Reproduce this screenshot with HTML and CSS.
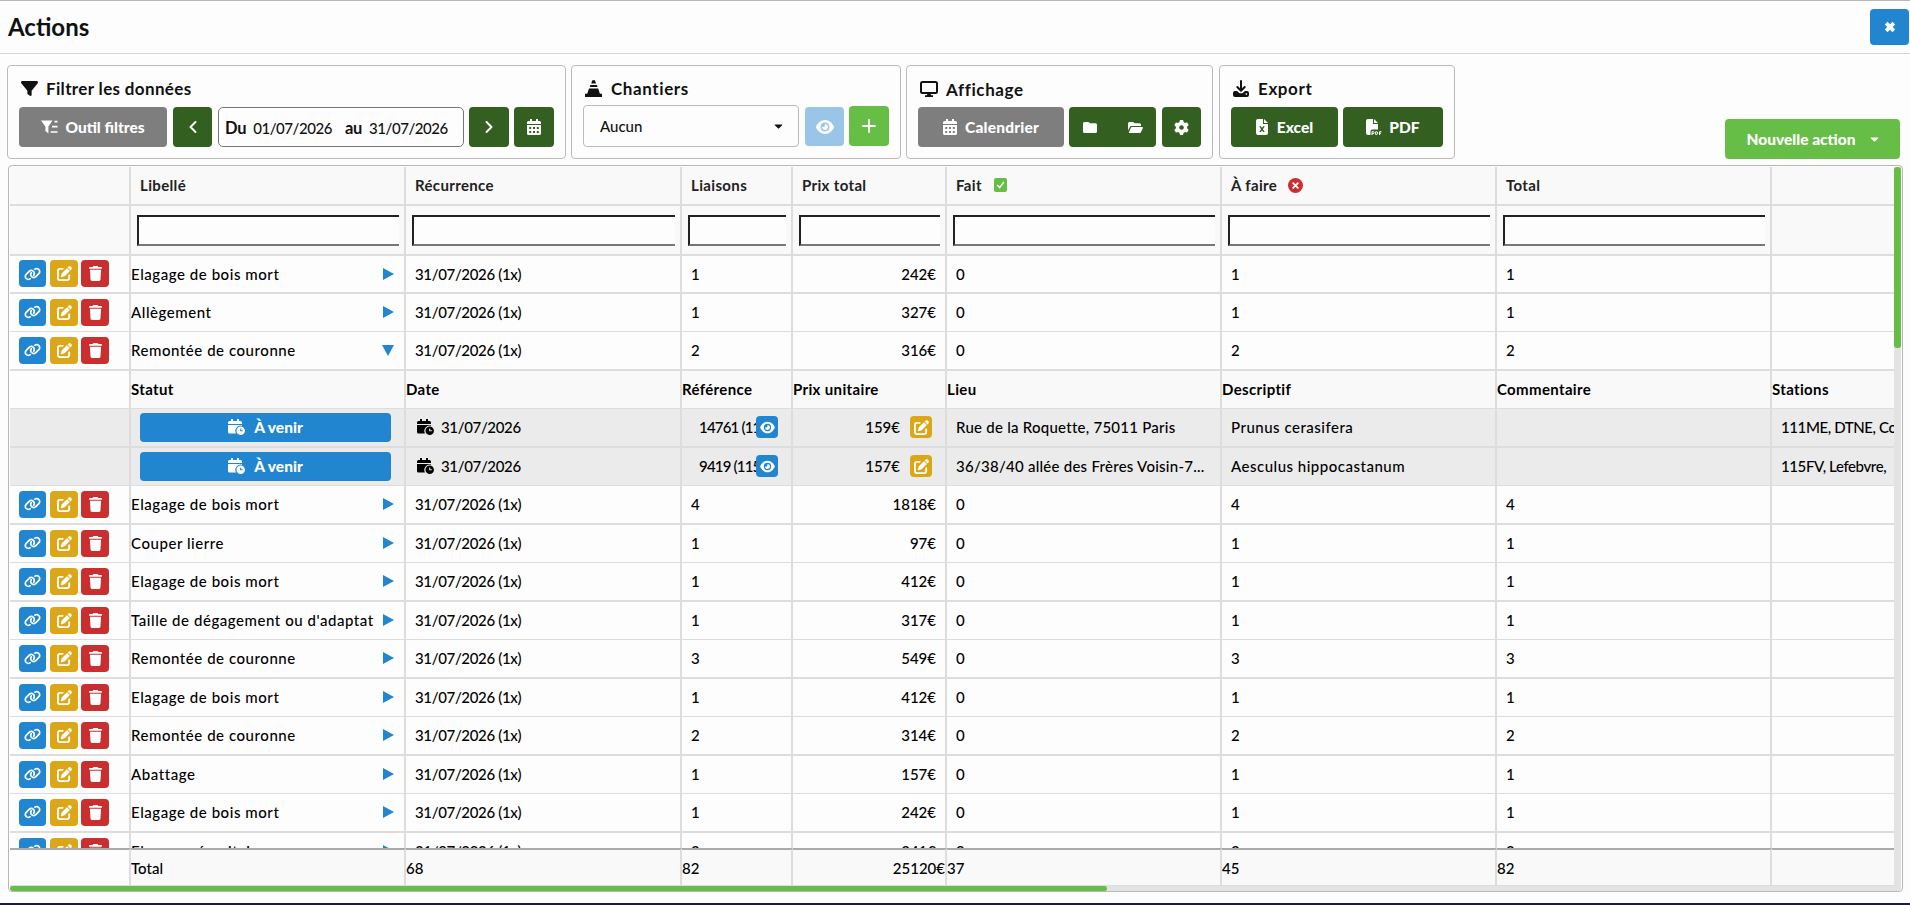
FILE: index.html
```html
<!DOCTYPE html>
<html lang="fr">
<head>
    <meta charset="UTF-8">
    <meta name="viewport" content="width=device-width, initial-scale=1.0">
    <title>Actions</title>
    <link rel="stylesheet" href="styles.css">
</head>
<body>
    <!-- Icons -->
    <svg class="sprite" xmlns="http://www.w3.org/2000/svg">
        <symbol id="i-filter" viewBox="0 0 512 512"><path d="M3.9 54.9C10.5 40.9 24.5 32 40 32l432 0c15.5 0 29.5 8.900 36.100 22.900s4.600 30.500-5.200 42.500L320 320.900 320 448c0 12.100-6.800 23.200-17.700 28.600s-23.800 4.300-33.500-3l-64-48c-8.100-6-12.800-15.500-12.800-25.600l0-79.100L9 97.300C-.7 85.400-2.800 68.800 3.900 54.900z"/></symbol>
        <symbol id="i-filter-list" viewBox="0 0 17 14"><path d="M0 .6h11.500L7.400 6.400V13.400L4.400 11V6.400z"/><path d="M13.500 1.600h3M11 6.700h5.500M9.700 12h6.800" fill="none" stroke="currentColor" stroke-width="1.700"/></symbol>
        <symbol id="i-left" viewBox="0 0 8 12"><path d="M6.500 1L1.500 6l5 5" fill="none" stroke="currentColor" stroke-width="1.900" stroke-linecap="round" stroke-linejoin="round"/></symbol>
        <symbol id="i-right" viewBox="0 0 8 12"><path d="M1.500 1l5 5-5 5" fill="none" stroke="currentColor" stroke-width="1.900" stroke-linecap="round" stroke-linejoin="round"/></symbol>
        <symbol id="i-calendar" viewBox="0 0 14 16"><path fill-rule="evenodd" d="M3 0h2v2h4V0h2v2h1.500A1.500 1.500 0 0 1 14 3.500V5H0V3.500A1.500 1.500 0 0 1 1.500 2H3zM0 6h14v8.500a1.500 1.500 0 0 1-1.500 1.500h-11A1.500 1.500 0 0 1 0 14.500zM2.200 8v2h2V8zM6 8v2h2V8zM9.800 8v2h2V8zM2.200 12v2h2v-2zM6 12v2h2v-2zM9.800 12v2h2v-2z"/></symbol>
        <symbol id="i-cal-clock" viewBox="0 0 17 16"><path d="M3 0h2v2h4V0h2v2h1.500A1.500 1.500 0 0 1 14 3.500V5H0V3.500A1.500 1.500 0 0 1 1.500 2H3zM0 6h14v.8a5.300 5.300 0 0 0-6 7.700H1.500A1.500 1.500 0 0 1 0 13z"/><path fill-rule="evenodd" d="M12.700 7.500a4.250 4.250 0 1 1 0 8.500 4.250 4.250 0 0 1 0-8.500zM12.200 9.500v2.800h2.600v-1h-1.600V9.500z"/></symbol>
        <symbol id="i-cone" viewBox="0 0 17 17"><path d="M7.300.3h2.600l1.200 3.200H6.200zM5.400 5h6.400l.8 2H4.700zM4 8.500h9.200l1.700 5.200H17V17H0v-3.300h2.200z"/></symbol>
        <symbol id="i-screen" viewBox="0 0 18 16"><rect x="1" y="1" width="16" height="11" rx="1.500" fill="none" stroke="currentColor" stroke-width="2"/><path d="M7.500 12h3l.5 2.200h2V16H5v-1.800h2z"/></symbol>
        <symbol id="i-download" viewBox="0 0 16 17"><path d="M8 1v9M4.300 7L8 10.700 11.700 7" fill="none" stroke="currentColor" stroke-width="2" stroke-linecap="round" stroke-linejoin="round"/><path fill-rule="evenodd" d="M2 11h2l2.600 2.200h2.800L12 11h2a2 2 0 0 1 2 2v2a2 2 0 0 1-2 2H2a2 2 0 0 1-2-2v-2a2 2 0 0 1 2-2zM12.600 13.200v1.600h1.500v-1.600z"/></symbol>
        <symbol id="i-folder" viewBox="0 0 14 11"><path d="M1.500 0h3.800L7 1.300h5.500A1.500 1.500 0 0 1 14 2.800v6.700a1.500 1.500 0 0 1-1.500 1.500h-11A1.500 1.500 0 0 1 0 9.500v-8A1.500 1.500 0 0 1 1.500 0z"/></symbol>
        <symbol id="i-folder-open" viewBox="0 0 15 11"><path d="M0 8.500v-7A1.500 1.500 0 0 1 1.500 0h3.600l1.700 1.300h4.700A1.500 1.500 0 0 1 13 2.800V4H3.500a2 2 0 0 0-1.800 1.200zM.8 10.500L3 5.600c.2-.4.500-.6 1-.6h10.300c.6 0 .9.500.6 1l-2 4.300c-.2.500-.6.700-1.100.700H1.200c-.3 0-.5-.2-.4-.5z"/></symbol>
        <symbol id="i-cog" viewBox="0 0 512 512"><path d="M495.900 166.600c3.200 8.700 .5 18.400-6.400 24.600l-43.300 39.400c1.100 8.300 1.700 16.800 1.700 25.400s-.6 17.100-1.700 25.400l43.300 39.400c6.900 6.200 9.600 15.900 6.400 24.600c-4.400 11.900-9.700 23.300-15.800 34.300l-4.700 8.100c-6.600 11-14 21.400-22.100 31.200c-5.900 7.200-15.700 9.600-24.500 6.800l-55.700-17.700c-13.400 10.300-28.200 18.900-44 25.400l-12.500 57.100c-2 9.100-9 16.300-18.200 17.800c-13.800 2.300-28 3.500-42.500 3.500s-28.700-1.200-42.500-3.500c-9.200-1.500-16.200-8.700-18.200-17.800l-12.500-57.100c-15.800-6.500-30.600-15.100-44-25.400L83.100 425.900c-8.800 2.800-18.600 .3-24.500-6.800c-8.100-9.800-15.500-20.200-22.100-31.200l-4.700-8.100c-6.100-11-11.400-22.400-15.800-34.300c-3.200-8.700-.5-18.400 6.400-24.600l43.300-39.400C64.600 273.100 64 264.600 64 256s.6-17.100 1.700-25.400L22.400 191.200c-6.900-6.200-9.600-15.900-6.400-24.600c4.400-11.900 9.700-23.300 15.800-34.300l4.700-8.100c6.600-11 14-21.400 22.100-31.200c5.900-7.200 15.700-9.600 24.500-6.800l55.700 17.700c13.400-10.300 28.200-18.900 44-25.400l12.500-57.100c2-9.100 9-16.300 18.200-17.800C227.300 1.200 241.500 0 256 0s28.700 1.200 42.500 3.500c9.200 1.500 16.200 8.700 18.200 17.800l12.500 57.100c15.800 6.500 30.600 15.100 44 25.400l55.700-17.700c8.800-2.800 18.600-.3 24.500 6.800c8.100 9.800 15.500 20.200 22.100 31.200l4.700 8.100c6.100 11 11.400 22.400 15.800 34.300zM256 336a80 80 0 1 0 0-160 80 80 0 1 0 0 160z"/></symbol>
        <symbol id="i-excel" viewBox="0 0 12 16"><path fill-rule="evenodd" d="M2 0h5v5h5v9a2 2 0 0 1-2 2H2a2 2 0 0 1-2-2V2a2 2 0 0 1 2-2zM8 0l4 4H8zM3.200 7.300l1.900 2.900-1.900 2.900h1.700l1.100-1.700 1.100 1.700h1.700l-1.900-2.900 1.900-2.900H7.100L6 9 4.900 7.300z"/></symbol>
        <symbol id="i-pdf" viewBox="0 0 16 16"><path d="M2 0h5v5h5v5.500H6.500A2 2 0 0 0 4.500 12.500V16H2a2 2 0 0 1-2-2V2a2 2 0 0 1 2-2zM8 0l4 4H8z"/><path d="M6 16v-3.300h1.200a1 1 0 0 1 0 2H6M9.700 15.500v-2.800h.6a1.300 1.300 0 0 1 0 2.800zM13.500 16v-3.300h2M13.500 14.300h1.600" fill="none" stroke="currentColor"/></symbol>
        <symbol id="i-eye" viewBox="0 0 576 512"><path d="M288 32c-80.800 0-145.500 36.800-192.600 80.600C48.600 156 17.300 208 2.500 243.700c-3.300 7.900-3.300 16.700 0 24.600C17.300 304 48.600 356 95.400 399.400C142.500 443.200 207.200 480 288 480s145.500-36.800 192.600-80.600c46.800-43.500 78.100-95.400 93-131.100c3.300-7.900 3.300-16.700 0-24.600c-14.900-35.700-46.200-87.700-93-131.100C433.500 68.800 368.800 32 288 32zM144 256a144 144 0 1 1 288 0 144 144 0 1 1 -288 0zm144-64c0 35.300-28.700 64-64 64c-7.100 0-13.900-1.200-20.300-3.300c-5.500-1.800-11.900 1.600-11.700 7.400c.3 6.900 1.300 13.800 3.200 20.700c13.700 51.200 66.400 81.600 117.600 67.900s81.600-66.400 67.900-117.600c-11.100-41.500-47.800-69.400-88.600-71.100c-5.800-.2-9.200 6.100-7.400 11.700c2.100 6.400 3.300 13.200 3.300 20.300z"/></symbol>
        <symbol id="i-plus" viewBox="0 0 14 14"><path d="M7 1v12M1 7h12" fill="none" stroke="currentColor" stroke-width="1.900" stroke-linecap="round"/></symbol>
        <symbol id="i-close" viewBox="0 0 12 12"><path d="M2.200 2.200l7.600 7.600M9.800 2.200L2.200 9.800" fill="none" stroke="currentColor" stroke-width="3.800"/></symbol>
        <symbol id="i-link" viewBox="0 0 640 512"><path d="M579.800 267.700c56.500-56.500 56.500-148 0-204.500c-50-50-128.800-56.500-186.300-15.400l-1.600 1.100c-14.400 10.300-17.700 30.300-7.400 44.600s30.300 17.700 44.600 7.400l1.600-1.100c32.100-22.900 76-19.300 103.800 8.600c31.500 31.500 31.500 82.500 0 114L422.300 334.800c-31.500 31.500-82.500 31.500-114 0c-27.900-27.900-31.500-71.800-8.600-103.800l1.100-1.600c10.300-14.400 6.900-34.400-7.400-44.600s-34.400-6.900-44.600 7.400l-1.100 1.600C206.500 251.200 213 330 263 380c56.500 56.500 148 56.500 204.500 0L579.800 267.700zM60.200 244.300c-56.500 56.500-56.500 148 0 204.500c50 50 128.800 56.500 186.300 15.400l1.600-1.100c14.400-10.300 17.700-30.300 7.400-44.600s-30.300-17.700-44.600-7.400l-1.600 1.100c-32.100 22.900-76 19.300-103.800-8.600C74 372 74 321 105.500 289.500L217.700 177.200c31.500-31.500 82.500-31.500 114 0c27.900 27.900 31.500 71.800 8.600 103.900l-1.100 1.600c-10.300 14.400-6.900 34.400 7.400 44.600s34.400 6.900 44.600-7.400l1.100-1.600C433.500 260.800 427 182 377 132c-56.500-56.500-148-56.500-204.500 0L60.200 244.300z"/></symbol>
        <symbol id="i-edit" viewBox="0 0 512 512"><path d="M471.600 21.700c-21.900-21.900-57.300-21.900-79.200 0L362.300 51.700l97.900 97.900 30.100-30.100c21.900-21.900 21.900-57.300 0-79.200L471.600 21.700zm-299.200 220c-6.100 6.100-10.800 13.600-13.500 21.900l-29.600 88.800c-2.900 8.600-.6 18.100 5.800 24.600s15.900 8.700 24.600 5.800l88.800-29.600c8.200-2.700 15.700-7.400 21.900-13.500L437.700 172.300 339.700 74.300 172.400 241.700zM96 64C43 64 0 107 0 160V416c0 53 43 96 96 96H352c53 0 96-43 96-96V320c0-17.700-14.300-32-32-32s-32 14.300-32 32v96c0 17.700-14.300 32-32 32H96c-17.700 0-32-14.300-32-32V160c0-17.700 14.300-32 32-32h96c17.700 0 32-14.300 32-32s-14.300-32-32-32H96z"/></symbol>
        <symbol id="i-trash" viewBox="0 0 448 512"><path d="M135.200 17.700L128 32H32C14.300 32 0 46.300 0 64S14.300 96 32 96H416c17.700 0 32-14.300 32-32s-14.300-32-32-32H320l-7.200-14.300C307.400 6.800 296.300 0 284.200 0H163.800c-12.100 0-23.200 6.800-28.600 17.700zM416 128H32L53.200 467c1.600 25.300 22.600 45 47.900 45H346.900c25.300 0 46.300-19.700 47.900-45L416 128z"/></symbol>
        <symbol id="i-check" viewBox="0 0 14 14"><path d="M3.800 7.400l2.300 2.400 4.200-5.600" fill="none" stroke="currentColor" stroke-width="1.500" stroke-linecap="round"/></symbol>
        <symbol id="i-cross" viewBox="0 0 14 14"><path d="M4.800 4.800l4.400 4.400M9.200 4.800L4.800 9.200" fill="none" stroke="currentColor" stroke-width="1.700" stroke-linecap="round"/></symbol>
        <symbol id="i-caret" viewBox="0 0 10 6"><path d="M1 .5h8c.6 0 .8.6.4 1L5.700 5.200a1 1 0 0 1-1.400 0L.6 1.500C.2 1.100.4.5 1 .5z"/></symbol>
    </svg>

    <header class="page-header">
        <h1>Actions</h1>
        <button class="btn blue close"><svg class="ic-close"><use href="#i-close"/></svg></button>
    </header>

    <div class="toolbar">
        <section class="panel panel-filter">
            <h2><svg class="ic-filter"><use href="#i-filter"/></svg>Filtrer les données</h2>
            <div class="controls">
                <button class="btn grey outil"><svg class="ic-list"><use href="#i-filter-list"/></svg>Outil filtres</button>
                <button class="btn dark prev"><svg class="ic-chev"><use href="#i-left"/></svg></button>
                <div class="dates"><b>Du</b><span class="from">01/07/2026</span><b>au</b><span>31/07/2026</span></div>
                <button class="btn dark next"><svg class="ic-chev"><use href="#i-right"/></svg></button>
                <button class="btn dark cal"><svg class="ic-cal"><use href="#i-calendar"/></svg></button>
            </div>
        </section>
        <section class="panel panel-sites">
            <h2><svg class="ic-cone"><use href="#i-cone"/></svg>Chantiers</h2>
            <div class="controls">
                <div class="select">Aucun<svg class="ic-caret"><use href="#i-caret"/></svg></div>
                <button class="btn blue disabled view"><svg class="ic-eye"><use href="#i-eye"/></svg></button>
                <button class="btn green add"><svg class="ic-plus"><use href="#i-plus"/></svg></button>
            </div>
        </section>
        <section class="panel panel-display">
            <h2><svg class="ic-screen"><use href="#i-screen"/></svg>Affichage</h2>
            <div class="controls">
                <button class="btn grey calendrier"><svg class="ic-cal"><use href="#i-calendar"/></svg>Calendrier</button>
                <button class="btn dark folders"><svg class="ic-folder"><use href="#i-folder"/></svg><svg class="ic-open"><use href="#i-folder-open"/></svg></button>
                <button class="btn dark cog"><svg class="ic-cog"><use href="#i-cog"/></svg></button>
            </div>
        </section>
        <section class="panel panel-export">
            <h2><svg class="ic-down"><use href="#i-download"/></svg>Export</h2>
            <div class="controls">
                <button class="btn dark excel"><svg class="ic-xls"><use href="#i-excel"/></svg>Excel</button>
                <button class="btn dark pdf"><svg class="ic-pdf"><use href="#i-pdf"/></svg>PDF</button>
            </div>
        </section>
        <button class="btn green new-action">Nouvelle action<svg class="ic-caret"><use href="#i-caret"/></svg></button>
    </div>

    <div class="table">
        <div class="viewport">
            <div class="row head">
                <div></div><div>Libellé</div><div>Récurrence</div><div>Liaisons</div><div>Prix total</div>
                <div>Fait<svg class="badge ok"><use href="#i-check"/></svg></div>
                <div>À faire<svg class="badge ko"><use href="#i-cross"/></svg></div>
                <div>Total</div><div></div>
            </div>
            <div class="row filters">
                <div></div>
                <div><i class="field"></i></div>
                <div><i class="field"></i></div>
                <div><i class="field"></i></div>
                <div><i class="field"></i></div>
                <div><i class="field"></i></div>
                <div><i class="field"></i></div>
                <div><i class="field"></i></div>
                <div></div>
            </div>
            <div class="rows" id="rows"></div>
            <div class="row foot">
                <div></div><div>Total</div><div>68</div><div>82</div><div class="price">25120€</div><div>37</div><div>45</div><div>82</div><div></div>
            </div>
            <div class="scroll-x"><span></span></div>
        </div>
        <div class="scroll-y"><span></span></div>
    </div>
    <div class="bottom-bar"></div>

    <script>
        const actions = [
            ["Elagage de bois mort", 1, 242],
            ["Allègement", 1, 327],
            ["Remontée de couronne", 2, 316, [
                ["14761 (111", 159, "Rue de la Roquette, 75011 Paris", "Prunus cerasifera", "111ME, DTNE, Co"],
                ["9419 (115", 157, "36/38/40 allée des Frères Voisin-7...", "Aesculus hippocastanum", "115FV, Lefebvre,"]
            ]],
            ["Elagage de bois mort", 4, 1818],
            ["Couper lierre", 1, 97],
            ["Elagage de bois mort", 1, 412],
            ["Taille de dégagement ou d'adaptat", 1, 317],
            ["Remontée de couronne", 3, 549],
            ["Elagage de bois mort", 1, 412],
            ["Remontée de couronne", 2, 314],
            ["Abattage", 1, 157],
            ["Elagage de bois mort", 1, 242],
            ["Elagage sécuritaire", 2, 341]
        ];

        const icon = name => `<svg class="ic-${name}"><use href="#i-${name}"/></svg>`;

        let html = "";
        actions.forEach(([label, count, price, details]) => {
            html += `<div class="row">
                <div class="tools"><button class="btn blue">${icon("link")}</button><button class="btn yellow">${icon("edit")}</button><button class="btn red">${icon("trash")}</button></div>
                <div class="label"><span>${label}</span><i class="arrow${details ? " open" : ""}"></i></div>
                <div class="date">31/07/2026 (1x)</div><div>${count}</div><div class="price">${price}€</div>
                <div>0</div><div>${count}</div><div>${count}</div><div></div>
            </div>`;
            if (!details) return;

            html += `<div class="row subhead"><div></div><div>Statut</div><div>Date</div><div>Référence</div><div>Prix unitaire</div><div>Lieu</div><div>Descriptif</div><div>Commentaire</div><div>Stations</div></div>`;
            details.forEach(([ref, unit, place, desc, stations]) => {
                html += `<div class="row detail">
                    <div></div>
                    <div class="status"><button class="btn blue">${icon("cal-clock")}À venir</button></div>
                    <div class="date">${icon("cal-clock")}31/07/2026</div>
                    <div class="ref"><span>${ref}</span><button class="btn blue">${icon("eye")}</button></div>
                    <div class="price">${unit}€<button class="btn yellow">${icon("edit")}</button></div>
                    <div class="place">${place}</div><div class="desc">${desc}</div><div></div><div class="stations">${stations}</div>
                </div>`;
            });
        });
        document.getElementById("rows").innerHTML = html;
    </script>
</body>
</html>
```
FILE: styles.css
```css
* {
    box-sizing: border-box;
    margin: 0;
    padding: 0;
}

body {
    display: flex;
    flex-direction: column;
    height: 905px;
    overflow: hidden;
    background: #fdfdfd;
    color: #111;
    font-family: Lato, "Liberation Sans", sans-serif;
    font-size: 15px;
    font-weight: 500;
    border-top: 1px solid #b8b8b8;
}

svg {
    fill: currentColor;
    flex: none;
}

.sprite {
    display: none;
}

/* Header */
.page-header {
    display: flex;
    justify-content: space-between;
    align-items: center;
    height: 53px;
    padding: 0 1px 0 8px;
    border-bottom: 1px solid #d5d5d5;
}

h1 {
    margin-top: -2px;
    font-size: 24px;
    font-weight: 700;
}

/* Buttons */
.btn {
    display: flex;
    align-items: center;
    justify-content: center;
    height: 40px;
    border: none;
    border-radius: 4px;
    color: white;
    font: 900 15.500px Lato, "Liberation Sans", sans-serif;
    cursor: pointer;
    white-space: nowrap;
}

.blue { background: #2185d0; }
.green { background: #67be46; }
.dark { background: #335f21; }
.grey { background: #7e7e7e; }
.yellow { background: #dba617; }
.red { background: #ca2f2f; }
.disabled { opacity: 0.45; }

.close { width: 39px; height: 36px; }

/* Toolbar */
.toolbar {
    display: flex;
    height: 111px;
    padding: 11px 10px 6px 7px;
}

.panel {
    height: 94px;
    padding-left: 11px;
    border: 1px solid #bbb;
    border-radius: 4px;
    margin-right: 5px;
}

.panel-filter { width: 559px; }
.panel-sites { width: 330px; }
.panel-display { width: 307px; margin-right: 6px; }
.panel-export { width: 236px; margin-right: 0; }

h2 {
    display: flex;
    align-items: center;
    height: 41px;
    padding: 3px 0 0 2px;
    font-size: 17px;
    font-weight: 700;
    letter-spacing: 0.6px;
}

.panel-filter h2 { letter-spacing: 0.35px; }
.panel-display h2 { padding-top: 5px; }

.controls {
    display: flex;
}

.outil { width: 148px; margin-right: 6px; }
.prev { width: 39px; margin-right: 6px; }
.next { width: 40px; margin: 0 5px; }
.cal { width: 40px; }

.dates {
    display: flex;
    align-items: baseline;
    width: 246px;
    height: 40px;
    padding: 10px 0 0 6px;
    border: 1px solid #777;
    border-radius: 5px;
    font-size: 15px;
    letter-spacing: -0.45px;
}

.dates b { font-size: 16.500px; margin-right: 7px; letter-spacing: -0.3px; }
.dates .from { margin-right: 13px; }

.select {
    display: flex;
    align-items: center;
    justify-content: space-between;
    width: 216px;
    height: 42px;
    padding: 0 15px 0 16px;
    margin: -2px 6px 0 0;
    border: 1px solid #bbb;
    border-radius: 4px;
    color: #111;
}

.view { width: 39px; height: 39px; margin-right: 5px; }
.add { width: 40px; margin-top: -1px; }
.calendrier { width: 146px; margin-right: 5px; letter-spacing: 0.2px; }
.folders { width: 87px; gap: 31px; margin-right: 6px; }
.cog { width: 39px; }
.excel { width: 107px; margin-right: 5px; }
.pdf { width: 100px; }

.new-action {
    width: 175px;
    margin: 54px 0 0 auto;
}

/* Icon sizes */
.ic-close { width: 12px; height: 12px; }
.ic-filter { width: 17px; height: 17px; margin-right: 8px; }
.ic-list { width: 17px; height: 14px; margin-right: 7px; }
.ic-chev { width: 8px; height: 12px; }
.ic-cal { width: 14px; height: 16px; }
.calendrier .ic-cal { margin-right: 8px; }
.ic-cone { width: 17px; height: 17px; margin-right: 9px; }
.ic-screen { width: 18px; height: 16px; margin-right: 8px; }
.ic-down { width: 16px; height: 17px; margin-right: 9px; }
.ic-caret { width: 9px; height: 5px; }
.new-action .ic-caret { margin-left: 14px; }
.ic-eye { width: 18px; height: 16px; }
.ic-plus { width: 14px; height: 14px; }
.ic-folder { width: 14px; height: 11px; }
.ic-open { width: 15px; height: 11px; }
.ic-cog { width: 15px; height: 15px; }
.ic-xls { width: 12px; height: 16px; margin-right: 9px; }
.ic-pdf { width: 16px; height: 16px; margin-right: 7px; }
.ic-link { width: 17px; height: 14px; }
.ic-edit { width: 15px; height: 15px; }
.ic-trash { width: 13px; height: 15px; }

/* Table */
.table {
    display: flex;
    width: 1895px;
    height: 727px;
    margin-left: 8px;
    border: 1px solid #b8b8b8;
    border-radius: 4px;
    overflow: hidden;
    padding: 1px 1px 0 1px;
}

.viewport {
    width: 1884px;
    overflow: hidden;
}

.row {
    display: grid;
    grid-template-columns: 121px 275px 276px 111px 154px 275px 275px 275px 122px;
    height: 38px;
    color: #000;
}

.row > div {
    display: flex;
    align-items: center;
    min-width: 0;
    padding: 0 0 1px 9px;
    border-right: 2px solid #ddd;
    border-bottom: 1px solid #ddd;
    overflow: hidden;
    white-space: nowrap;
}

.row > div:last-child { border-right: none; }

.rows .row:nth-child(odd) { height: 39px; }
.rows .row:first-child { height: 38px; }
.rows .row:nth-child(odd) > div { border-bottom-width: 2px; }

.row.head {
    height: 39px;
    font-weight: 700;
    letter-spacing: 0.35px;
    color: #222;
}

.row.head > div,
.row.filters > div,
.row.subhead > div:not(:first-child),
.row.foot > div:not(:first-child) {
    background: #f9f9f9;
}

.row.head > div,
.row.filters > div {
    border-bottom-width: 2px;
}

.row.filters { height: 50px; }

.row.filters > div { padding: 0 5px 0 6px; }

.field {
    width: 100%;
    height: 31px;
    background: #fdfdfd;
    border: 2px solid #222;
    border-right: none;
    border-bottom-color: #777;
}

.badge {
    width: 13px;
    height: 14px;
    margin-left: 12px;
    color: white;
    border-radius: 2px;
    background: #67be46;
}

.badge.ko {
    width: 15px;
    height: 15px;
    margin-left: 11px;
    border-radius: 50%;
    background: #ca2f2f;
}

.rows {
    height: 592px;
    overflow: hidden;
}

.tools .btn { width: 27px; height: 27px; margin-right: 4px; }
.tools .yellow { width: 28px; margin-right: 3px; }
.tools .red { width: 28px; }

.row > .label { padding: 0 10px 1px 0; justify-content: space-between; }
.label span { max-width: 247px; overflow: hidden; letter-spacing: 0.55px; }

.row > .date { letter-spacing: -0.35px; }

.arrow {
    border: 6px solid transparent;
    border-left: 11px solid #2185d0;
    border-right: none;
}

.arrow.open {
    border: 6px solid transparent;
    border-top: 11px solid #2185d0;
    border-bottom: none;
}

.row > .price { justify-content: flex-end; padding-right: 9px; }

.row.subhead { font-weight: 700; letter-spacing: 0.35px; }
.row.subhead > div { padding-left: 0; }
.row.detail > div { background: #ebebeb; }

.ic-cal-clock { width: 17px; height: 16px; margin: 0 7px 0 2px; }
.status .btn { width: 251px; height: 29px; }
.status .ic-cal-clock { margin: 0 9px 0 0; }

.row > .ref { padding-left: 17px; }
.ref span { width: 57px; overflow: hidden; letter-spacing: -0.8px; }
.detail .ref .btn,
.detail .price .btn { flex: none; width: 22px; height: 22px; }
.detail .ref .ic-eye { width: 15px; height: 13px; }
.row.detail > .price { padding-right: 13px; }
.detail .price .btn { margin-left: 10px; }
.row > .place { letter-spacing: 0.25px; }
.row > .desc { letter-spacing: 0.5px; }
.row > .stations { letter-spacing: -0.4px; }

.row.foot { height: 38px; }

.row.foot > div {
    padding: 0;
    border-top: 2px solid #aaa;
    border-bottom: 1px solid #ddd;
}

.scroll-x {
    height: 6px;
    background: #e3e3e3;
}

.scroll-x span {
    display: block;
    width: 1097px;
    height: 5px;
    border-radius: 3px;
    background: #67be46;
}

.scroll-y {
    width: 7px;
    background: #e3e3e3;
}

.scroll-y span {
    display: block;
    height: 181px;
    border-radius: 3px;
    background: #67be46;
}

.bottom-bar {
    height: 2px;
    margin-top: auto;
    background: #1b1b45;
}
```
